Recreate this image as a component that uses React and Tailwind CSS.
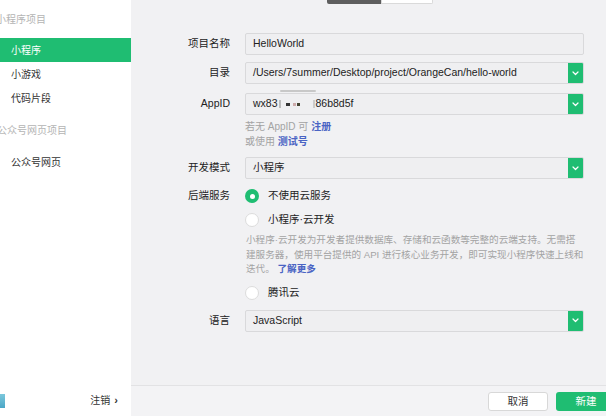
import React from 'react';

const font = { fontFamily: '"Liberation Sans", "Noto Sans CJK SC", sans-serif' };

const Chevron = () => (
  <svg width="7" height="5" viewBox="0 0 7 5" fill="none">
    <path d="M1 1l2.5 2.5L6 1" stroke="white" strokeWidth="1.2" strokeLinecap="round" strokeLinejoin="round" />
  </svg>
);

const Field = ({ value, select }) => (
  <div className="flex-1 h-[22px] flex items-stretch border border-[#d9d9db] rounded-[2px] bg-[#efeff1] overflow-hidden">
    <div className="flex-1 flex items-center pl-[7px] text-[10.5px] text-[#222]">{value}</div>
    {select && (
      <div className="w-[15px] bg-[#1fbd72] flex items-center justify-center">
        <Chevron />
      </div>
    )}
  </div>
);

const Row = ({ label, children, className = '' }) => (
  <div className={`flex items-center ${className}`}>
    <div className="w-[99px] text-right text-[10.5px] text-[#222] shrink-0">{label}</div>
    <div className="ml-[15px] mr-[22px] flex-1 flex">{children}</div>
  </div>
);

const Radio = ({ checked, label }) => (
  <div className="flex items-center gap-[9px]">
    {checked ? (
      <div className="w-[14px] h-[14px] rounded-full bg-[#1fbd72] flex items-center justify-center">
        <div className="w-[5px] h-[5px] rounded-full bg-white" />
      </div>
    ) : (
      <div className="w-[14px] h-[14px] rounded-full bg-white border border-[#dcdcdc]" />
    )}
    <span className="text-[10.5px] text-[#222]">{label}</span>
  </div>
);

const App = () => {
  return (
    <div className="w-[606px] h-[416px] flex overflow-hidden bg-[#f1f1f3]" style={font}>
      {/* sidebar */}
      <div className="w-[131px] shrink-0 bg-white flex flex-col">
        <div className="h-[38px] flex items-center -ml-[4px] text-[10px] text-[#b4b4b4]">小程序项目</div>
        <div className="h-[24px] flex items-center pl-[11px] bg-[#1fbd72] text-white text-[10px]">小程序</div>
        <div className="h-[24px] flex items-center pl-[11px] text-[10px] text-[#333]">小游戏</div>
        <div className="h-[25px] flex items-center pl-[11px] text-[10px] text-[#333]">代码片段</div>
        <div className="h-[39px] flex items-center -ml-[3px] text-[10px] text-[#b4b4b4]">公众号网页项目</div>
        <div className="h-[24px] flex items-center pl-[11px] text-[10px] text-[#333]">公众号网页</div>
        <div className="flex-1" />
        <div className="h-[31px] flex items-center justify-between pr-[13px]">
          <div className="w-[5px] h-[14px] bg-gradient-to-b from-[#7cc8dc] to-[#4aa6c6]" />
          <div className="flex items-center gap-[4px] text-[10px] text-[#333]">
            <span>注销</span>
            <span className="text-[11px] font-bold">›</span>
          </div>
        </div>
      </div>

      {/* main */}
      <div className="flex-1 flex flex-col">
        <div className="h-[4px] ml-[196px] flex">
          <div className="w-[54px] bg-[#5e5e5e] rounded-bl-[2px]" />
          <div className="w-[52px] bg-white border border-t-0 border-[#dadada] rounded-br-[2px]" />
        </div>

        <div className="flex-1 flex flex-col pt-[29px]">
          <Row label="项目名称">
            <Field value="HelloWorld" />
          </Row>
          <Row label="目录" className="mt-[7px]">
            <Field value="/Users/7summer/Desktop/project/OrangeCan/hello-world" select />
          </Row>
          <Row label="AppID" className="mt-[9px]">
            <div className="flex-1 relative flex">
              <Field
                value={
                  <span className="flex items-center">
                    wx83
                    <span className="inline-block w-[2px] h-[8px] bg-[#bbb] ml-[1px]" />
                    <span className="inline-block w-[4px] h-[3px] bg-[#333] ml-[5px]" />
                    <span className="inline-block w-[3px] h-[3px] bg-[#caa] ml-[3px]" />
                    <span className="inline-block w-[3px] h-[3px] bg-[#443] ml-[1px]" />
                    <span className="inline-block w-[2px] h-[8px] bg-[#ccc] ml-[13px] mr-[1px]" />
                    86b8d5f
                  </span>
                }
                select
              />
              <div className="absolute left-[35px] -top-[3px] w-[36px] h-[2px] bg-[#c8c8c8] rounded-full" />
            </div>
          </Row>
          <div className="ml-[114px] mt-[4px] text-[10px] leading-[15px] text-[#a3a3a3]">
            <div>
              若无 AppID 可 <span className="text-[#4a64c4] font-bold">注册</span>
            </div>
            <div>
              或使用 <span className="text-[#4a64c4] font-bold">测试号</span>
            </div>
          </div>
          <Row label="开发模式" className="mt-[8px]">
            <Field value="小程序" select />
          </Row>
          <Row label="后端服务" className="mt-[7px] h-[20px]">
            <Radio checked label="不使用云服务" />
          </Row>
          <div className="ml-[114px] mt-[4px] h-[20px] flex items-center">
            <Radio label="小程序·云开发" />
          </div>
          <div className="ml-[115px] mr-[16px] mt-[3px] text-[9.6px] leading-[14.5px] text-[#a3a3a3] whitespace-nowrap">
            小程序·云开发为开发者提供数据库、存储和云函数等完整的云端支持。无需搭
            <br />
            建服务器，使用平台提供的 API 进行核心业务开发，即可实现小程序快速上线和
            <br />
            迭代。 <span className="text-[#4a64c4] font-bold">了解更多</span>
          </div>
          <div className="ml-[114px] mt-[6px] h-[20px] flex items-center">
            <Radio label="腾讯云" />
          </div>
          <Row label="语言" className="mt-[7px]">
            <Field value="JavaScript" select />
          </Row>
        </div>

        <div className="h-[31px] border-t border-[#e2e2e4] bg-[#f3f3f5] flex justify-end items-start pt-[6px] gap-[8px] -mr-[10px]">
          <button className="w-[60px] h-[19px] bg-white border border-[#d8d8d8] rounded-[3px] text-[10.5px] text-[#333]">取消</button>
          <button className="w-[60px] h-[19px] bg-[#1fbd72] rounded-[3px] text-[10.5px] text-white">新建</button>
        </div>
      </div>
    </div>
  );
};

export default App;
